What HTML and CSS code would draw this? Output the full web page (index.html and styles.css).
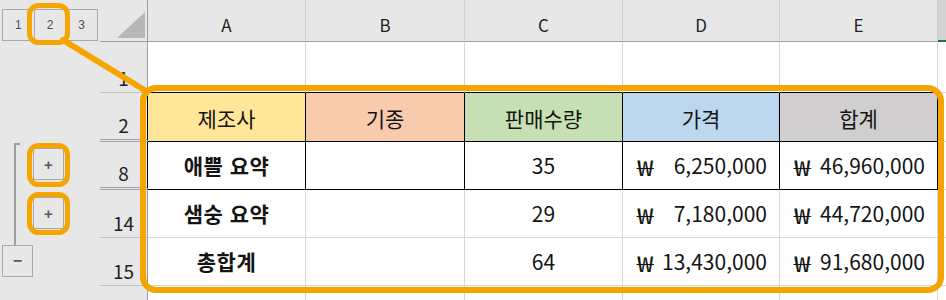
FILE: index.html
```html
<!DOCTYPE html>
<html lang="ko">
<head>
<meta charset="utf-8">
<title>Sheet</title>
<link rel="stylesheet" href="styles.css">
</head>
<body>
<div class="sheet">
  <aside class="outline">
    <div class="levels">
      <span class="lvl">1</span><span class="lvl">2</span><span class="lvl">3</span>
    </div>
    <div class="group">
      <div class="bracket-col">
        <div class="bracket"></div>
        <span class="obtn minus">−</span>
      </div>
      <div class="plus-col">
        <span class="obtn">+</span>
        <span class="obtn">+</span>
      </div>
    </div>
  </aside>

  <div class="grid">
    <div class="corner"><span class="tri"></span></div>
    <div class="colhdr">A</div>
    <div class="colhdr">B</div>
    <div class="colhdr">C</div>
    <div class="colhdr">D</div>
    <div class="colhdr">E</div>
    <div class="colhdr extra"></div>

    <div class="rowhdr">1</div>
    <div class="cell top"></div>
    <div class="cell top"></div>
    <div class="cell top"></div>
    <div class="cell top"></div>
    <div class="cell top"></div>
    <div class="cell rest"></div>

    <div class="rowhdr dbl edge">2</div>
    <div class="cell head yellow">제조사</div>
    <div class="cell head peach">기종</div>
    <div class="cell head green">판매수량</div>
    <div class="cell head blue">가격</div>
    <div class="cell head gray">합계</div>
    <div class="cell rest"></div>

    <div class="rowhdr dbl edge">8</div>
    <div class="cell boxed label">애쁠 요약</div>
    <div class="cell boxed"></div>
    <div class="cell boxed num">35</div>
    <div class="cell boxed money"><span class="won">₩</span><span>6,250,000</span></div>
    <div class="cell boxed money"><span class="won">₩</span><span>46,960,000</span></div>
    <div class="cell rest"></div>

    <div class="rowhdr">14</div>
    <div class="cell label">샘숭 요약</div>
    <div class="cell"></div>
    <div class="cell num">29</div>
    <div class="cell money"><span class="won">₩</span><span>7,180,000</span></div>
    <div class="cell money"><span class="won">₩</span><span>44,720,000</span></div>
    <div class="cell rest"></div>

    <div class="rowhdr">15</div>
    <div class="cell label">총합계</div>
    <div class="cell"></div>
    <div class="cell num">64</div>
    <div class="cell money"><span class="won">₩</span><span>13,430,000</span></div>
    <div class="cell money"><span class="won">₩</span><span>91,680,000</span></div>
    <div class="cell rest"></div>

    <div class="rowhdr">16</div>
    <div class="cell"></div>
    <div class="cell"></div>
    <div class="cell"></div>
    <div class="cell"></div>
    <div class="cell"></div>
    <div class="cell rest"></div>
  </div>

  <svg class="overlay" width="946" height="300" viewBox="0 0 946 300" aria-hidden="true">
    <g fill="none" stroke="#f6a500" stroke-linecap="round">
      <line x1="63" y1="40" x2="146" y2="91" stroke-width="6"/>
      <rect x="29.5" y="5.5" width="38" height="37" rx="9" stroke-width="5"/>
      <rect x="29.5" y="145.5" width="38" height="39" rx="9" stroke-width="5"/>
      <rect x="29.5" y="194.5" width="38" height="38" rx="9" stroke-width="5"/>
      <rect x="143" y="88" width="798" height="202" rx="13" stroke-width="6"/>
    </g>
  </svg>
</div>
</body>
</html>
```

FILE: styles.css
```css
* { box-sizing: border-box; }

html, body {
  margin: 0;
  padding: 0;
  width: 946px;
  height: 300px;
  overflow: hidden;
  background: #e7e7e7;
}

.sheet {
  position: relative;
  display: flex;
  width: 946px;
  height: 300px;
  overflow: hidden;
  background: #e7e7e7;
  font-family: "Noto Sans CJK KR", "Noto Sans", sans-serif;
  color: #141414;
}

/* ---------- outline panel ---------- */
.outline {
  flex: none;
  width: 100px;
  display: flex;
  flex-direction: column;
}

.levels {
  display: flex;
  margin: 9px 0 0 2px;
  width: 96px;
  height: 32px;
  border: 1px solid #a9a9a9;
}

.lvl {
  flex: 1;
  display: flex;
  align-items: center;
  justify-content: center;
  font-family: "Liberation Sans", Arial, sans-serif;
  font-size: 12px;
  color: #505050;
  border-right: 1px solid #a9a9a9;
}
.lvl:last-child { border-right: none; }

.group {
  display: flex;
  margin-top: 102px;
}

.bracket-col {
  width: 33px;
  display: flex;
  flex-direction: column;
}

.bracket {
  margin-left: 14px;
  width: 6px;
  height: 102px;
  border-left: 2px solid #9d9d9d;
  border-top: 2px solid #9d9d9d;
}

.plus-col {
  display: flex;
  flex-direction: column;
  gap: 17px;
  padding-top: 5px;
}

.obtn {
  display: flex;
  align-items: center;
  justify-content: center;
  width: 31px;
  height: 32px;
  border: 1px solid #a9a9a9;
  font-family: "Liberation Sans", Arial, sans-serif;
  font-size: 15px;
  font-weight: bold;
  color: #5a5a5a;
}

.obtn.minus {
  margin-left: 2px;
  width: 31px;
  height: 32px;
  font-size: 16px;
}

/* ---------- grid ---------- */
.grid {
  flex: none;
  display: grid;
  grid-template-columns: 48px 158px 159px 158px 157px 158px 8px;
  grid-template-rows: 42px 51px 49px 48px 48px 48px 48px;
  background: #fff;
}

.corner {
  background: #e7e7e7;
  border-right: 1px solid #9e9e9e;
  border-bottom: 1px solid #9e9e9e;
  display: flex;
  align-items: flex-end;
  justify-content: flex-end;
  padding: 0 2px 3px 0;
}

.tri {
  width: 28px;
  height: 26px;
  background: #b7b7b7;
  clip-path: polygon(100% 0, 100% 100%, 0 100%);
}

.colhdr {
  background: #e7e7e7;
  border-right: 1px solid #cfcfcf;
  border-bottom: 1px solid #9e9e9e;
  display: flex;
  justify-content: center;
  align-items: center;
  padding-top: 8px;
  font-size: 17px;
  line-height: 1;
  color: #222;
}

.colhdr.extra {
  background: #d3d3d3;
  border-right: none;
  border-bottom: 2px solid #217346;
}

.rowhdr {
  background: #e7e7e7;
  border-right: 1px solid #9e9e9e;
  border-bottom: 1px solid #c2c2c2;
  display: flex;
  justify-content: center;
  align-items: flex-end;
  padding-bottom: 5px;
  font-size: 19px;
  line-height: 1;
  color: #222;
}

.rowhdr.dbl { border-bottom: 3px double #a3a3a3; }
.rowhdr.edge { border-right-color: #000; }

.cell {
  border-right: 1px solid #d6d6d6;
  border-bottom: 1px solid #d6d6d6;
  display: flex;
  align-items: center;
  font-size: 21px;
  line-height: 1;
  white-space: nowrap;
}

.cell.rest { border-right: none; }
.cell.top { border-bottom-color: #000; }

.head {
  justify-content: center;
  border-right-color: #000;
  border-bottom-color: #000;
  padding-top: 2px;
}

.yellow { background: #ffe699; }
.peach  { background: #f8cbad; }
.green  { background: #c6e0b4; }
.blue   { background: #bdd7ee; }
.gray   { background: #d0cece; }

.boxed {
  border-right-color: #000;
  border-bottom-color: #000;
}

.label {
  justify-content: center;
  font-weight: bold;
  letter-spacing: 0.5px;
}

.num { justify-content: center; }

.money {
  justify-content: space-between;
  padding: 0 12px 0 14px;
}

.won {
  font-size: 22px;
  transform: scaleX(1.35);
  transform-origin: left center;
}

.overlay {
  position: absolute;
  left: 0;
  top: 0;
  pointer-events: none;
}
```
